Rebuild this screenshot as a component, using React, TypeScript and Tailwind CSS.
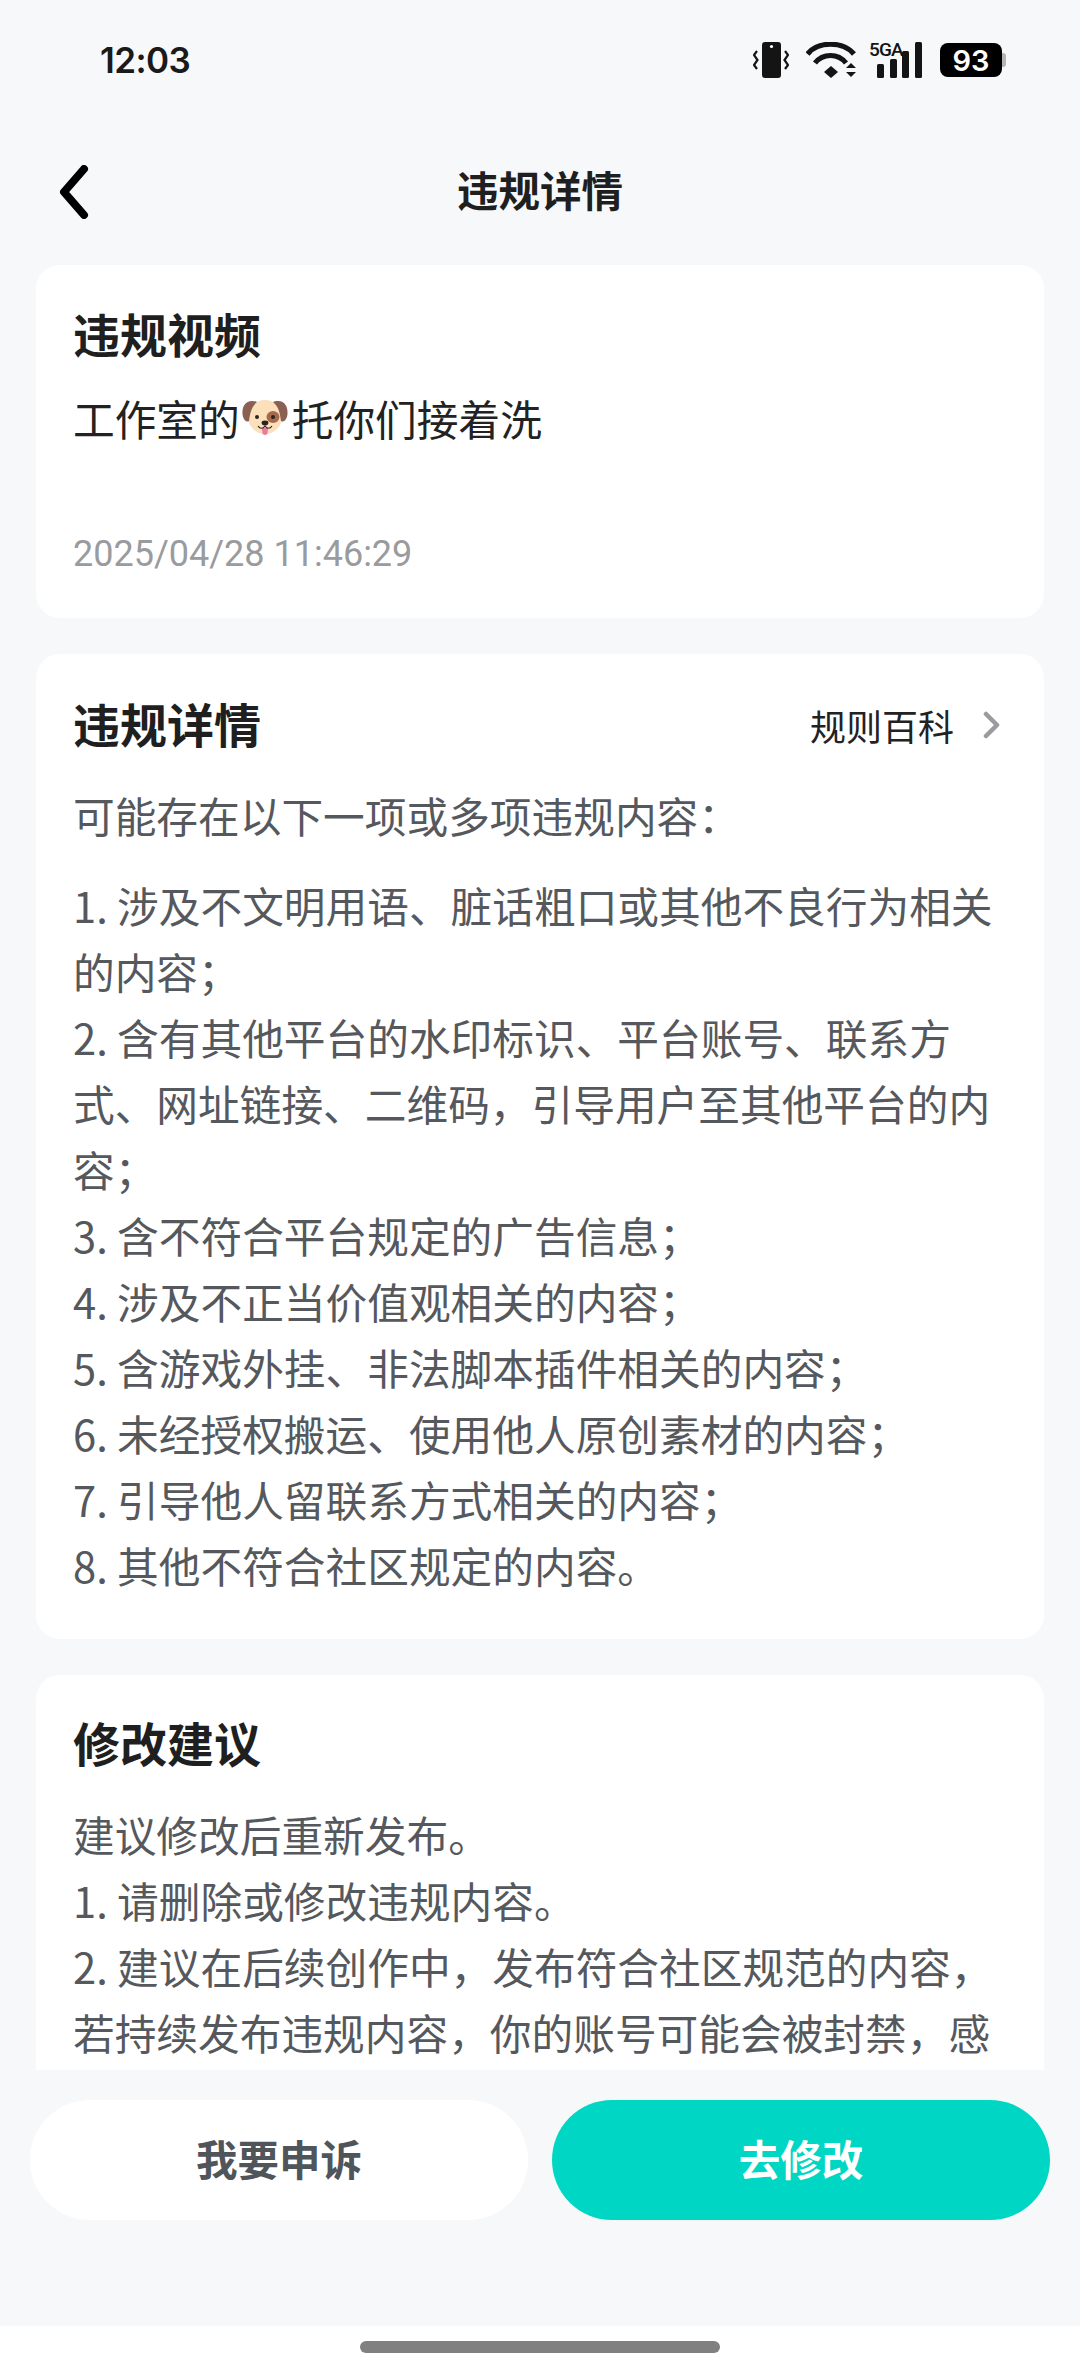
import React from 'react'

const cjk = 'font-["Noto_Sans_CJK_SC","Noto_Sans",sans-serif]'

const ruleLines = [
  '1. 涉及不文明用语、脏话粗口或其他不良行为相关',
  '的内容；',
  '2. 含有其他平台的水印标识、平台账号、联系方',
  '式、网址链接、二维码，引导用户至其他平台的内',
  '容；',
  '3. 含不符合平台规定的广告信息；',
  '4. 涉及不正当价值观相关的内容；',
  '5. 含游戏外挂、非法脚本插件相关的内容；',
  '6. 未经授权搬运、使用他人原创素材的内容；',
  '7. 引导他人留联系方式相关的内容；',
  '8. 其他不符合社区规定的内容。',
]

const adviceLines = [
  '建议修改后重新发布。',
  '1. 请删除或修改违规内容。',
  '2. 建议在后续创作中，发布符合社区规范的内容，',
  '若持续发布违规内容，你的账号可能会被封禁，感',
]

function Lines({ lines }: { lines: string[] }) {
  return (
    <div className="text-[41.7px] leading-[66px] text-[#55585d] whitespace-nowrap">
      {lines.map((line, i) => (
        <div key={i}>{line}</div>
      ))}
    </div>
  )
}

function VibrateIcon() {
  return (
    <svg width="36" height="36" viewBox="0 0 36 36" className="block">
      <rect x="9" y="0" width="19" height="36" rx="3" fill="#141414" />
      <circle cx="18.5" cy="4.5" r="1.6" fill="#fff" />
      <path d="M4 9 L1 13 L4.5 18 L1 23 L4 27" fill="none" stroke="#141414" strokeWidth="2.2" />
      <path d="M32 9 L35 13 L31.5 18 L35 23 L32 27" fill="none" stroke="#141414" strokeWidth="2.2" />
    </svg>
  )
}

function WifiIcon() {
  return (
    <svg width="52" height="36" viewBox="0 0 52 36" className="block">
      <path d="M1.5 12 C12 -1 37 -1 48 12" fill="none" stroke="#141414" strokeWidth="5.2" />
      <path d="M9 21 C17 11 32 11 40 21" fill="none" stroke="#141414" strokeWidth="5.2" />
      <path d="M25 24 L32 30 L25 36 L18 30 Z" fill="#141414" />
      <path d="M45 21 L50 26 L40 26 Z" fill="#141414" />
      <path d="M40 30 L50 30 L45 35 Z" fill="#141414" />
    </svg>
  )
}

function SignalIcon() {
  return (
    <div className="relative w-[54px] h-[36px]">
      <svg width="54" height="36" viewBox="0 0 54 36" className="block">
        <rect x="8" y="22" width="7" height="14" rx="1.5" fill="#141414" />
        <rect x="21" y="17" width="7" height="19" rx="1.5" fill="#141414" />
        <rect x="33" y="9" width="7" height="27" rx="1.5" fill="#141414" />
        <rect x="46" y="0" width="7" height="36" rx="1.5" fill="#141414" />
      </svg>
      <span className="absolute left-0 top-[-2px] font-['Roboto',sans-serif] font-medium text-[19px] leading-[20px] tracking-[-0.9px] text-[#141414]">5GA</span>
    </div>
  )
}

function Battery() {
  return (
    <div className="flex items-center">
      <div className="w-[62px] h-[34px] bg-black rounded-[8px] flex items-center justify-center text-white font-['Inter',sans-serif] font-semibold text-[29px] leading-none">93</div>
      <div className="w-[4px] h-[14px] bg-[#b4b4b4] rounded-r-[3px]" />
    </div>
  )
}

function DogEmoji() {
  return (
    <svg width="46" height="38" viewBox="0 0 46 38" className="block">
      <ellipse cx="23" cy="18" rx="17" ry="17" fill="#fbe0bb" />
      <path d="M10 2 C3 2 0 8 0.5 15 C1 20 4 24 7 22 C8 15 9 8 15 3 C13.5 2.3 12 2 10 2 Z" fill="#8a6052" />
      <path d="M36 2 C43 2 46 8 45.5 15 C45 20 42 24 39 22 C38 15 37 8 31 3 C32.5 2.3 34 2 36 2 Z" fill="#8a6052" />
      <ellipse cx="31" cy="18" rx="6.5" ry="6" fill="#a56a4e" />
      <circle cx="15" cy="18" r="2" fill="#2c2320" />
      <circle cx="31" cy="18" r="2" fill="#2c2320" />
      <ellipse cx="23" cy="24" rx="3.4" ry="2.4" fill="#2c2320" />
      <path d="M20 29 L26 29 L25.6 34 C25.2 36.5 20.8 36.5 20.4 34 Z" fill="#ea7aa0" />
      <path d="M16 27 C18 30 21 30 23 27 C25 30 28 30 30 27" fill="none" stroke="#2c2320" strokeWidth="1.2" />
    </svg>
  )
}

export default function App() {
  return (
    <div className={`${cjk} w-[1080px] h-[2374px] bg-[#f6f8fa] flex flex-col overflow-hidden`}>
      {/* Status bar */}
      <div className="h-[120px] shrink-0 flex items-center justify-between pl-[100px] pr-[74px]">
        <span className="font-['Inter',sans-serif] font-semibold text-[35px] tracking-[-0.6px] leading-none text-[#1a1a1a]">12:03</span>
        <div className="flex items-center gap-[17px]">
          <VibrateIcon />
          <div className="flex items-center gap-[11px]">
            <WifiIcon />
            <SignalIcon />
          </div>
          <Battery />
        </div>
      </div>

      {/* Title bar */}
      <div className="relative h-[145px] shrink-0 flex items-center justify-center pb-[7px]">
        <svg width="30" height="54" viewBox="0 0 30 54" className="absolute left-[59px] top-[45px]">
          <path d="M25 4 L5 27 L25 50" fill="none" stroke="#000" strokeWidth="8" strokeLinecap="round" strokeLinejoin="round" />
        </svg>
        <span className="text-[41.5px] font-bold text-[#1f1f1f]">违规详情</span>
      </div>

      {/* Scrolling content, clipped above the buttons */}
      <div className="h-[1805px] shrink-0 overflow-hidden px-[36px] flex flex-col gap-[36px]">
        <div className="shrink-0 bg-white rounded-[24px] px-[37px] pt-[37px] pb-[39px]">
          <div className="text-[47px] leading-[62px] font-bold text-[#1f1f1f]">违规视频</div>
          <div className="mt-[21px] flex items-center h-[66px] text-[41.7px] text-[#222]">
            <span>工作室的</span>
            <span className="ml-[2px] mr-[4px]"><DogEmoji /></span>
            <span>托你们接着洗</span>
          </div>
          <div className="mt-[78px] font-['Roboto',sans-serif] text-[36px] leading-[50px] text-[#999b9e]">2025/04/28 11:46:29</div>
        </div>

        <div className="shrink-0 bg-white rounded-[24px] px-[37px] pt-[38px] pb-[41px]">
          <div className="flex items-center justify-between">
            <span className="text-[47px] leading-[62px] font-bold text-[#1f1f1f]">违规详情</span>
            <div className="flex items-center gap-[29px] mt-[3px] text-[36px] text-[#222]">
              <span>规则百科</span>
              <svg width="18" height="28" viewBox="0 0 18 28" className="mr-[6px]">
                <path d="M3 3 L14 14 L3 25" fill="none" stroke="#999b9e" strokeWidth="4.5" strokeLinecap="round" strokeLinejoin="round" />
              </svg>
            </div>
          </div>
          <div className="mt-[28px]">
            <Lines lines={['可能存在以下一项或多项违规内容：']} />
          </div>
          <div className="mt-[24px]">
            <Lines lines={ruleLines} />
          </div>
        </div>

        <div className="shrink-0 bg-white rounded-t-[24px] px-[37px] pt-[36px] pb-[38px]">
          <div className="text-[47px] leading-[62px] font-bold text-[#1f1f1f]">修改建议</div>
          <div className="mt-[28px]">
            <Lines lines={adviceLines} />
          </div>
        </div>
      </div>

      {/* Action buttons */}
      <div className="shrink-0 px-[30px] pt-[30px] flex gap-[24px]">
        <button className="flex-1 h-[120px] pb-[4px] rounded-full bg-white text-[41.5px] font-bold text-[#50555c]">我要申诉</button>
        <button className="flex-1 h-[120px] pb-[4px] rounded-full bg-[#00d6c4] text-[41.5px] font-bold text-white">去修改</button>
      </div>

      <div className="flex-1" />

      {/* Gesture bar */}
      <div className="h-[48px] shrink-0 bg-white flex justify-center pt-[15px]">
        <div className="w-[360px] h-[12px] rounded-full bg-[#808080]" />
      </div>
    </div>
  )
}
